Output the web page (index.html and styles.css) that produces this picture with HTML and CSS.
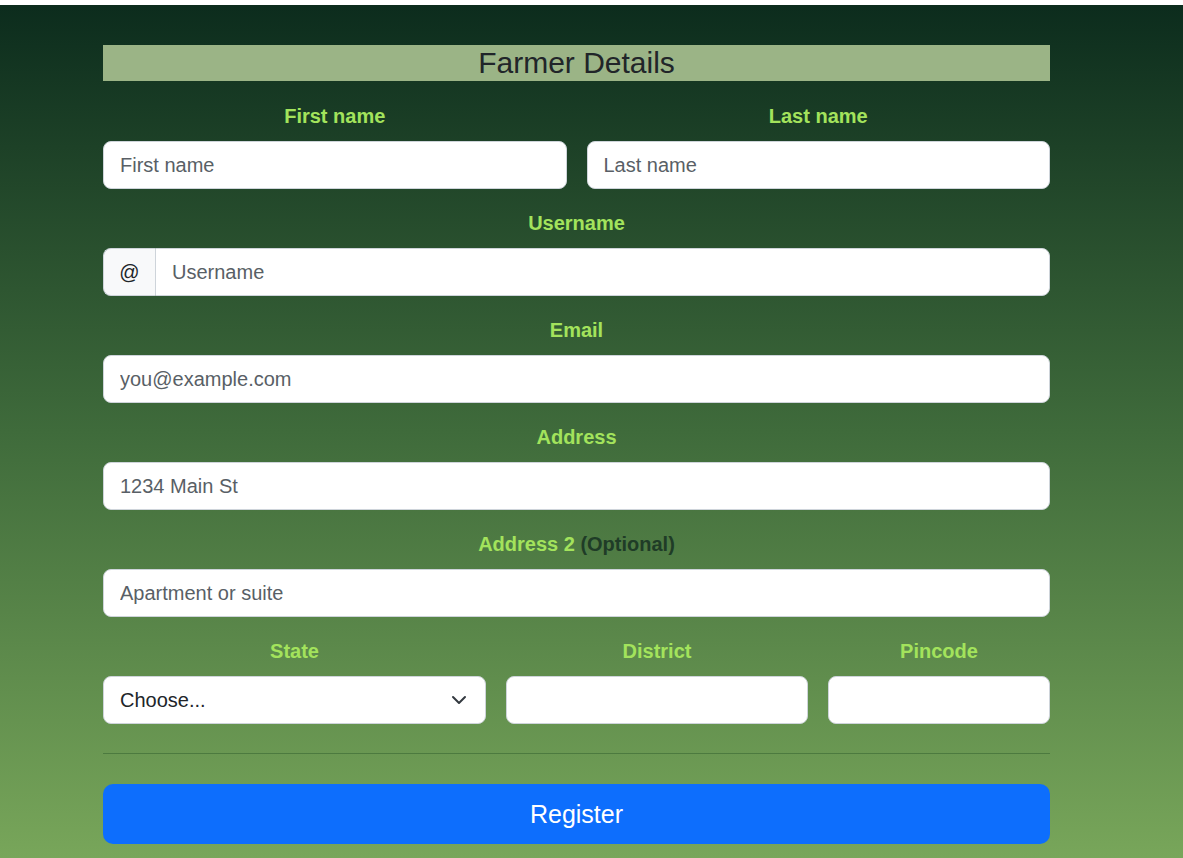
FILE: index.html
```html
<!DOCTYPE html>
<html lang="en">
<head>
<meta charset="utf-8">
<title>Farmer Details</title>
<link rel="stylesheet" href="styles.css">
</head>
<body>
<div class="page">
  <form class="container">
    <h3 class="title">Farmer Details</h3>
    <div class="row two">
      <div class="field">
        <label class="lbl">First name</label>
        <input class="ctl" type="text" placeholder="First name">
      </div>
      <div class="field">
        <label class="lbl">Last name</label>
        <input class="ctl" type="text" placeholder="Last name">
      </div>
    </div>
    <div class="field">
      <label class="lbl">Username</label>
      <div class="group">
        <span class="addon">@</span>
        <input class="ctl grp" type="text" placeholder="Username">
      </div>
    </div>
    <div class="field">
      <label class="lbl">Email</label>
      <input class="ctl" type="email" placeholder="you@example.com">
    </div>
    <div class="field">
      <label class="lbl">Address</label>
      <input class="ctl" type="text" placeholder="1234 Main St">
    </div>
    <div class="field">
      <label class="lbl">Address 2 <span class="muted">(Optional)</span></label>
      <input class="ctl" type="text" placeholder="Apartment or suite">
    </div>
    <div class="row three">
      <div class="field">
        <label class="lbl">State</label>
        <div class="select">
          <span>Choose...</span>
          <svg width="16" height="16" viewBox="0 0 16 16"><path d="M2 5l6 6 6-6" fill="none" stroke="#343a40" stroke-width="2" stroke-linecap="round" stroke-linejoin="round"/></svg>
        </div>
      </div>
      <div class="field">
        <label class="lbl">District</label>
        <input class="ctl" type="text">
      </div>
      <div class="field">
        <label class="lbl">Pincode</label>
        <input class="ctl" type="text">
      </div>
    </div>
    <hr class="rule">
    <button class="btn" type="button">Register</button>
  </form>
</div>
</body>
</html>
```
FILE: styles.css
```css
* { box-sizing: border-box; }
html, body { margin: 0; padding: 0; background: #fff; }
body { font-family: "Liberation Sans", Arial, sans-serif; }
.page {
  margin-top: 5px;
  min-height: 853px;
  background: linear-gradient(180deg, #0c2c1d 0%, #3f6b3b 50%, #78a65a 100%);
  padding-top: 40px;
  padding-bottom: 14px;
}
.container {
  width: 947px;
  margin: 0 0 0 103px;
  display: flex;
  flex-direction: column;
  gap: 19px;
}
.title {
  margin: 0 0 1px;
  height: 36px;
  line-height: 36px;
  font-size: 30px;
  font-weight: 400;
  text-align: center;
  color: #212529;
  background: #9bb486;
}
.row { display: grid; column-gap: 20px; }
.row.two { grid-template-columns: 1fr 1fr; }
.row.three { grid-template-columns: 383px 302px 222px; }
.field { display: flex; flex-direction: column; }
.lbl {
  display: block;
  text-align: center;
  font-size: 20px;
  line-height: 30px;
  font-weight: 700;
  color: #a3e35c;
  margin-bottom: 10px;
}
.muted { color: #1f3c27; }
.ctl {
  display: block;
  width: 100%;
  height: 48px;
  padding: 0 16px;
  font-family: "Liberation Sans", Arial, sans-serif;
  font-size: 20px;
  color: #212529;
  background: #fff;
  border: 1px solid #ced4da;
  border-radius: 8px;
  outline: none;
}
.ctl::placeholder { color: #595f66; }
.group { display: flex; }
.addon {
  width: 52px;
  height: 48px;
  display: flex;
  align-items: center;
  justify-content: center;
  font-size: 20px;
  color: #212529;
  background: #f8f9fa;
  border: 1px solid #ced4da;
  border-right: none;
  border-radius: 8px 0 0 8px;
}
.ctl.grp { flex: 1; border-radius: 0 8px 8px 0; }
.select {
  height: 48px;
  display: flex;
  align-items: center;
  justify-content: space-between;
  padding: 0 18px 0 16px;
  font-size: 20px;
  color: #212529;
  background: #fff;
  border: 1px solid #ced4da;
  border-radius: 8px;
}
.rule {
  margin: 10px 0 11px;
  border: 0;
  border-top: 1px solid #4c7a3f;
}
.btn {
  height: 60px;
  width: 100%;
  border: 0;
  border-radius: 10px;
  background: #0d6efd;
  color: #fff;
  font-family: "Liberation Sans", Arial, sans-serif;
  font-size: 25px;
}
```
